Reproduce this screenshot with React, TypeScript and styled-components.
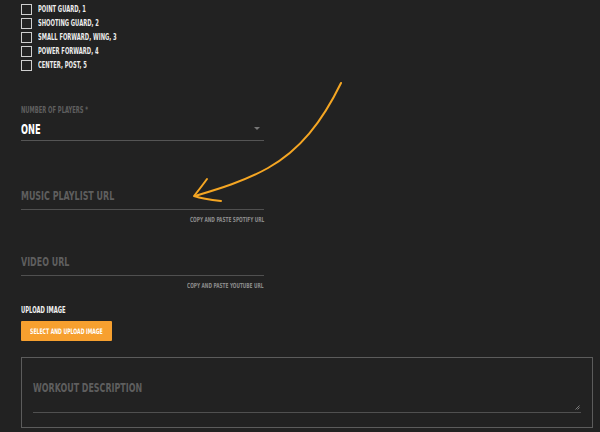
import React from "react";
import styled, { createGlobalStyle } from "styled-components";

const GlobalStyle = createGlobalStyle`
  html, body {
    margin: 0;
    padding: 0;
    background: #222222;
  }
  body {
    font-family: "DejaVu Sans Condensed", "DejaVu Sans", sans-serif;
    font-weight: 700;
    overflow: hidden;
  }
`;

const positions = [
  "POINT GUARD, 1",
  "SHOOTING GUARD, 2",
  "SMALL FORWARD, WING, 3",
  "POWER FORWARD, 4",
  "CENTER, POST, 5",
];

const App = () => {
  return (
    <Page>
      <GlobalStyle />
      <StForm>
        <StCheckList>
          {positions.map((p) => (
            <StCheckRow key={p}>
              <StBox />
              <StCheckText>
                <Narrow>{p}</Narrow>
              </StCheckText>
            </StCheckRow>
          ))}
        </StCheckList>

        <StSelectField>
          <StSmallLabel>
            <Narrow>NUMBER OF PLAYERS *</Narrow>
          </StSmallLabel>
          <StSelectRow>
            <StValue>
              <Narrow>ONE</Narrow>
            </StValue>
            <StCaret />
          </StSelectRow>
        </StSelectField>

        <StUrlField $top={47}>
          <StPlaceholder $gap={5}>
            <Narrow>MUSIC PLAYLIST URL</Narrow>
          </StPlaceholder>
          <StHint>
            <Narrow $origin="right">COPY AND PASTE SPOTIFY URL</Narrow>
          </StHint>
        </StUrlField>

        <StUrlField $top={29}>
          <StPlaceholder $gap={5}>
            <Narrow>VIDEO URL</Narrow>
          </StPlaceholder>
          <StHint>
            <Narrow $origin="right">COPY AND PASTE YOUTUBE URL</Narrow>
          </StHint>
        </StUrlField>

        <StUpload>
          <StUploadLabel>
            <Narrow>UPLOAD IMAGE</Narrow>
          </StUploadLabel>
          <StButton type="button">
            <Narrow $origin="center">SELECT AND UPLOAD IMAGE</Narrow>
          </StButton>
        </StUpload>

        <StDescBox>
          <StDescInner>
            <StPlaceholder $gap={16}>
              <Narrow>WORKOUT DESCRIPTION</Narrow>
            </StPlaceholder>
            <StResize width="5" height="5" viewBox="0 0 5 5">
              <path d="M0.5 4.5 L4.5 0.5 M2.5 4.5 L4.5 2.5" stroke="#7a7a7a" strokeWidth="1" />
            </StResize>
          </StDescInner>
        </StDescBox>
      </StForm>

      <StArrow width="600" height="432" viewBox="0 0 600 432">
        <path
          d="M341 83 C 322 122, 300 150, 268 168 C 243 182, 215 190, 195 196"
          fill="none"
          stroke="#f5a623"
          strokeWidth="2"
          strokeLinecap="round"
        />
        <path
          d="M207 179 C 202 186, 198 191, 194 196 C 203 199, 212 200, 221 201"
          fill="none"
          stroke="#f5a623"
          strokeWidth="2"
          strokeLinecap="round"
          strokeLinejoin="round"
        />
      </StArrow>
    </Page>
  );
};

const Page = styled.div`
  position: relative;
  width: 600px;
  height: 432px;
  overflow: hidden;
  background: #222222;
`;

const Narrow = styled.span<{ $origin?: string }>`
  display: inline-block;
  flex-shrink: 0;
  white-space: nowrap;
  transform: scaleX(0.68);
  transform-origin: ${(p) => p.$origin || "left"} center;
`;

const StForm = styled.div`
  display: flex;
  flex-direction: column;
  padding: 4px 7px 0 21px;
`;

const StCheckList = styled.div`
  display: flex;
  flex-direction: column;
  gap: 3px;
`;

const StCheckRow = styled.div`
  display: flex;
  align-items: center;
  gap: 6px;
  height: 11px;
`;

const StBox = styled.span`
  box-sizing: border-box;
  width: 11px;
  height: 11px;
  border: 1.5px solid #cfcfcf;
`;

const StCheckText = styled.span`
  color: #ececec;
  font-size: 8.5px;
  line-height: 11px;
`;

const StSelectField = styled.div`
  width: 243px;
  margin-top: 34px;
  border-bottom: 1px solid #555555;
`;

const StSmallLabel = styled.div`
  color: #5f5f5f;
  font-size: 8.5px;
  line-height: 10px;
`;

const StSelectRow = styled.div`
  display: flex;
  align-items: center;
  justify-content: space-between;
  height: 23px;
  margin-top: 2px;
`;

const StValue = styled.span`
  color: #ffffff;
  font-size: 13.5px;
  line-height: 16px;
`;

const StCaret = styled.span`
  width: 0;
  height: 0;
  margin-right: 4px;
  border-left: 3px solid transparent;
  border-right: 3px solid transparent;
  border-top: 3px solid #777777;
`;

const StUrlField = styled.div<{ $top: number }>`
  width: 243px;
  margin-top: ${(p) => p.$top}px;
  display: flex;
  flex-direction: column;
`;

const StPlaceholder = styled.div<{ $gap: number }>`
  color: #5e5e5e;
  font-size: 13px;
  line-height: 16px;
  padding-bottom: ${(p) => p.$gap}px;
  border-bottom: 1px solid #505050;
`;

const StHint = styled.div`
  align-self: flex-end;
  color: #8a8a8a;
  font-size: 7px;
  line-height: 10px;
  margin-top: 5px;
`;

const StUpload = styled.div`
  margin-top: 14px;
  display: flex;
  flex-direction: column;
  align-items: flex-start;
`;

const StUploadLabel = styled.div`
  color: #f2f2f2;
  font-size: 8.5px;
  line-height: 10px;
`;

const StButton = styled.button`
  margin-top: 6px;
  width: 91px;
  height: 20px;
  display: flex;
  align-items: center;
  justify-content: center;
  border: none;
  border-radius: 1px;
  padding: 0;
  background: #f7a02f;
  color: #ffffff;
  font-family: inherit;
  font-weight: 700;
  font-size: 7.5px;
  white-space: nowrap;
`;

const StDescBox = styled.div`
  margin-top: 16px;
  height: 71px;
  box-sizing: border-box;
  border: 1px solid #5c5c5c;
  padding: 22px 11px 0 11px;
`;

const StDescInner = styled.div`
  position: relative;
`;

const StResize = styled.svg`
  position: absolute;
  right: 1px;
  bottom: 3px;
`;

const StArrow = styled.svg`
  position: absolute;
  left: 0;
  top: 0;
  pointer-events: none;
`;

export default App;
